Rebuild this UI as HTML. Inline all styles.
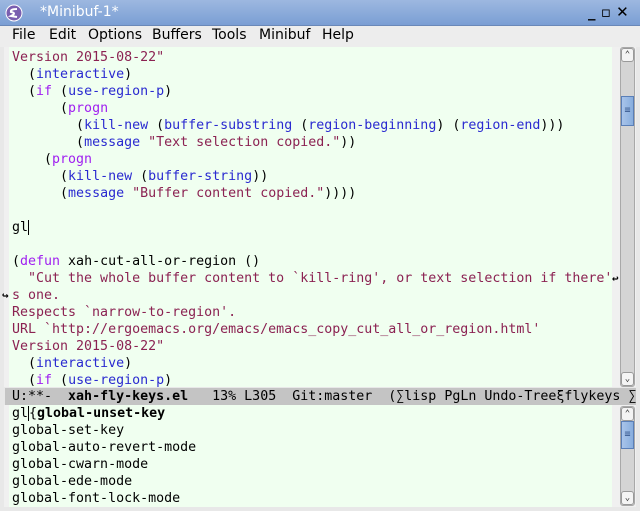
<!DOCTYPE html>
<html><head><meta charset="utf-8"><style>
*{margin:0;padding:0;box-sizing:border-box}
body{width:640px;height:511px;overflow:hidden;background:#e8e8e8;position:relative;font-family:"DejaVu Sans Mono","Liberation Mono",monospace;font-size:13.3px}
.title{position:absolute;left:0;top:0;width:640px;height:26px;background:linear-gradient(#9db8e0,#7a9ed4);border-bottom:1px solid #6a88b8}
.title .t{position:absolute;left:40px;top:4px;color:#fff;font:14px "DejaVu Sans",sans-serif}
.menu{position:absolute;left:0;top:26px;width:640px;height:21px;background:#ededed;font:14px "DejaVu Sans",sans-serif;color:#000}
.menu span{position:absolute;top:1px}
.pane{position:absolute;left:4px;width:632px;background:#f0f0f0}
.txt{position:absolute;left:9px;background:#f0fff0;width:603px}
.l{position:absolute;left:12px;height:17px;line-height:17px;white-space:pre;color:#000}
.s{color:#8b2252}.k{color:#a020f0}.f{color:#2a2ad0}
.sb{position:absolute;left:620px;width:15px;background:#d4d4d4;border:1px solid #a8a8a8;border-radius:3px}
.arr{position:absolute;left:0;width:13px;height:14px;background:#f4f4f4;border:1px solid #999;border-radius:3px;font-size:9px;text-align:center;line-height:13px;color:#333}
.th{position:absolute;left:0;width:13px;background:linear-gradient(90deg,#a9c4ea,#88aede);border:1px solid #5a7fb8;color:#3a5a90;font-size:10px;text-align:center}
.mode{position:absolute;left:5px;top:388px;width:631px;height:17px;background:#c4c4c4;line-height:17px;white-space:pre;padding-left:7px;overflow:hidden}
</style></head><body>
<div class="title"><svg style="position:absolute;left:5px;top:4px" width="18" height="18"><circle cx="9" cy="9" r="8" fill="#7a5fb0" stroke="#fff" stroke-width="1"/><path d="M12 5 Q5 5 6 8 Q12 9 6 12 L12 13" stroke="#fff" stroke-width="2" fill="none"/></svg><span class="t">*Minibuf-1*</span>
<span style="position:absolute;left:588px;top:3px;color:#000;font:bold 15px 'DejaVu Sans',sans-serif">_ ▫ ✕</span></div>
<div class="menu"><span style="left:12px">File</span><span style="left:49px">Edit</span><span style="left:88px">Options</span><span style="left:152px">Buffers</span><span style="left:212px">Tools</span><span style="left:259px">Minibuf</span><span style="left:322px">Help</span></div>
<div class="pane" style="top:47px;height:340px"></div>
<div class="txt" style="top:47px;height:340px"></div>
<div class="sb" style="top:47px;height:340px"><div class="arr" style="top:0">⌃</div><div class="th" style="top:48px;height:30px;line-height:28px">≡</div><div class="arr" style="bottom:0">⌄</div></div>
<div class="l s" style="top:49px">Version 2015-08-22"</div>
<div class="l" style="top:66px">  (<span class="f">interactive</span>)</div>
<div class="l" style="top:83px">  (<span class="k">if</span> (<span class="f">use-region-p</span>)</div>
<div class="l" style="top:100px">      (<span class="k">progn</span></div>
<div class="l" style="top:117px">        (<span class="f">kill-new</span> (<span class="f">buffer-substring</span> (<span class="f">region-beginning</span>) (<span class="f">region-end</span>)))</div>
<div class="l" style="top:134px">        (<span class="f">message</span> <span class="s">"Text selection copied."</span>))</div>
<div class="l" style="top:151px">    (<span class="k">progn</span></div>
<div class="l" style="top:168px">      (<span class="f">kill-new</span> (<span class="f">buffer-string</span>))</div>
<div class="l" style="top:185px">      (<span class="f">message</span> <span class="s">"Buffer content copied."</span>))))</div>
<div class="l" style="top:219px">gl<span style="border-left:1px solid #000"></span></div>
<div class="l" style="top:253px">(<span class="k">defun</span> xah-cut-all-or-region ()</div>
<div class="l s" style="top:270px">  "Cut the whole buffer content to `kill-ring', or text selection if there'</div>
<div class="l" style="top:270px;left:612px;font-size:11px;font-weight:bold">↩</div>
<div class="l" style="top:287px;left:2px;font-size:11px;font-weight:bold">↪</div>
<div class="l s" style="top:287px">s one.</div>
<div class="l s" style="top:304px">Respects `narrow-to-region'.</div>
<div class="l s" style="top:321px">URL `http://ergoemacs.org/emacs/emacs_copy_cut_all_or_region.html'</div>
<div class="l s" style="top:338px">Version 2015-08-22"</div>
<div class="l" style="top:355px">  (<span class="f">interactive</span>)</div>
<div class="l" style="top:372px;height:15px;overflow:hidden">  (<span class="k">if</span> (<span class="f">use-region-p</span>)</div>
<div class="mode">U:**-  <b>xah-fly-keys.el</b>   13% L305  Git:master  (∑lisp PgLn Undo-Treeξflykeys ∑</div>
<div class="pane" style="top:405px;height:102px"></div>
<div class="txt" style="top:405px;height:102px"></div>
<div class="sb" style="top:406px;height:100px"><div class="arr" style="top:0">⌃</div><div class="th" style="top:14px;height:28px;line-height:26px">≡</div><div class="arr" style="bottom:0">⌄</div></div>
<div class="l" style="top:405px">gl<span style="border-left:1px solid #000"></span>{<b>global-unset-key</b></div>
<div class="l" style="top:422px">global-set-key</div>
<div class="l" style="top:439px">global-auto-revert-mode</div>
<div class="l" style="top:456px">global-cwarn-mode</div>
<div class="l" style="top:473px">global-ede-mode</div>
<div class="l" style="top:490px">global-font-lock-mode</div>
</body></html>
